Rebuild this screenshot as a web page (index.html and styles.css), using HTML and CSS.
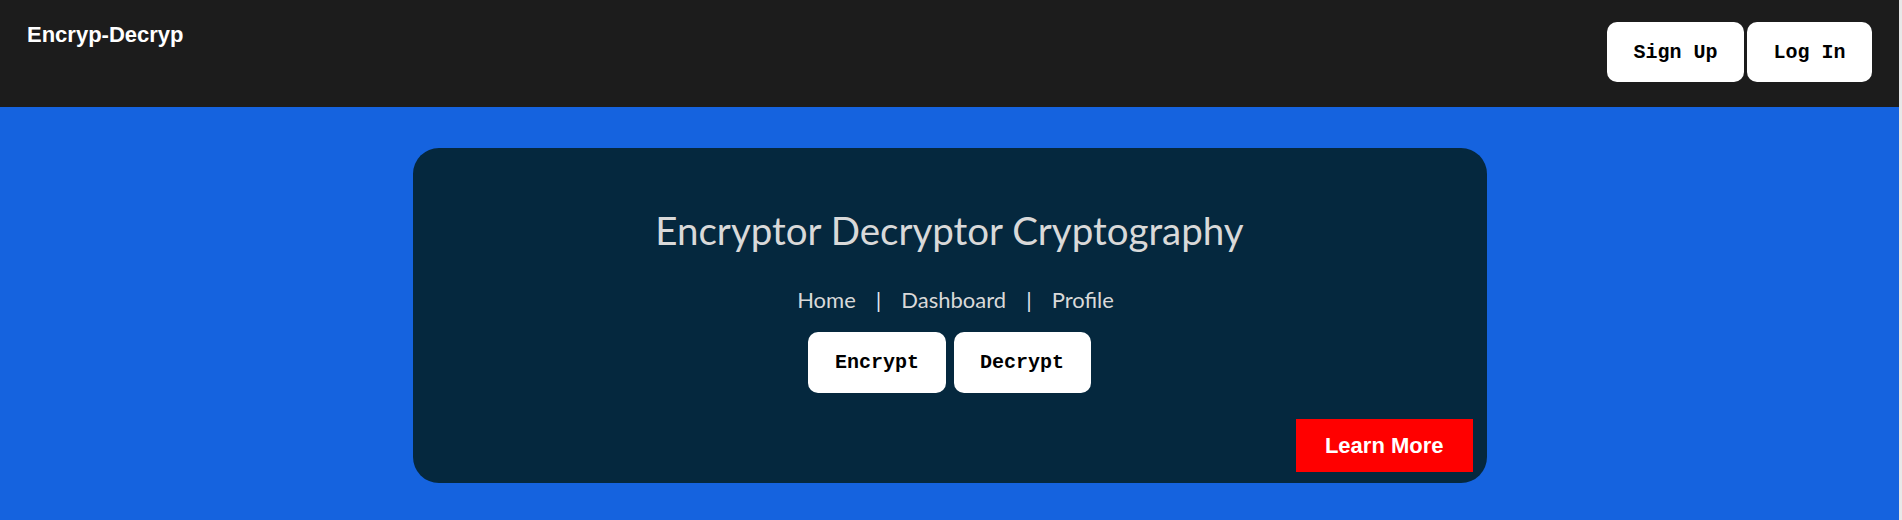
FILE: index.html
```html
<!DOCTYPE html>
<html lang="en">
<head>
<meta charset="utf-8">
<title>Encryp-Decryp</title>
<link rel="stylesheet" href="styles.css">
</head>
<body>
<header class="topbar">
  <div class="logo">Encryp-Decryp</div>
  <div class="auth">
    <button class="btn">Sign Up</button>
    <button class="btn">Log In</button>
  </div>
</header>
<main class="stage">
  <section class="card">
    <h1 class="title">Encryptor Decryptor Cryptography</h1>
    <nav class="links">
      <a class="link">Home</a>
      <span class="sep">|</span>
      <a class="link">Dashboard</a>
      <span class="sep">|</span>
      <a class="link">Profile</a>
    </nav>
    <div class="actions">
      <button class="btn btn-card">Encrypt</button>
      <button class="btn btn-card">Decrypt</button>
    </div>
    <button class="learn">Learn More</button>
  </section>
</main>
</body>
</html>
```
FILE: styles.css
```css
html {
  background: #e8e8e8;
}
body {
  margin: 0 3px 0 0;
  min-height: 100vh;
  background: #1563df;
  font-family: "Liberation Sans", Arial, sans-serif;
}
.topbar {
  box-sizing: border-box;
  height: 107px;
  background: #1c1c1c;
  padding: 22px 27px 0 27px;
  display: flex;
  justify-content: space-between;
  align-items: flex-start;
}
.logo {
  color: #ffffff;
  font-family: "Liberation Sans", Arial, sans-serif;
  font-weight: bold;
  font-size: 22px;
}
.auth {
  display: flex;
  gap: 3px;
}
.btn {
  box-sizing: border-box;
  height: 60px;
  padding: 0 26.5px;
  border: none;
  border-radius: 10px;
  background: #ffffff;
  color: #000000;
  font-family: "Liberation Mono", "DejaVu Sans Mono", monospace;
  font-weight: bold;
  font-size: 20px;
}
.stage {
  padding-top: 41px;
}
.card {
  box-sizing: border-box;
  width: 1074px;
  height: 335px;
  margin: 0 auto;
  background: #05283e;
  border-radius: 26px;
  padding: 59px 0 11px 0;
  display: flex;
  flex-direction: column;
  align-items: center;
}
.title {
  margin: 0;
  font-family: Lato, "Open Sans", sans-serif;
  font-weight: 400;
  font-size: 38.5px;
  line-height: 47px;
  color: #d9d9d9;
}
.links {
  margin-top: 33px;
  padding-left: 12px;
  display: flex;
  gap: 20px;
  font-family: Lato, "Open Sans", sans-serif;
  font-size: 22px;
  line-height: 26px;
  color: #d9d9d9;
}
.link {
  color: #d9d9d9;
}
.sep {
  color: #dfe6ee;
}
.actions {
  margin-top: 19px;
  display: flex;
  gap: 8px;
}
.btn-card {
  height: 61px;
}
.learn {
  align-self: flex-end;
  margin-top: 26px;
  margin-right: 14px;
  box-sizing: border-box;
  height: 53px;
  padding: 0 29px;
  border: none;
  background: #ff0000;
  color: #ffffff;
  font-family: "Liberation Sans", Arial, sans-serif;
  font-weight: bold;
  font-size: 22px;
}
```
